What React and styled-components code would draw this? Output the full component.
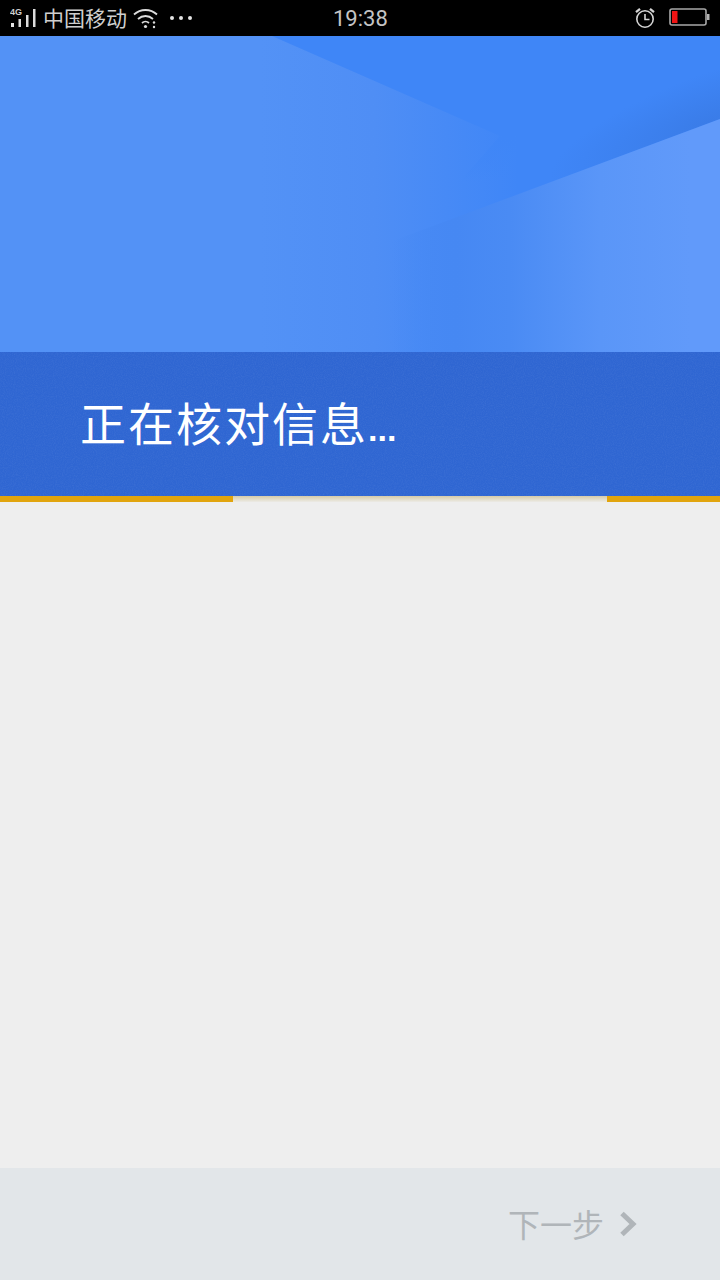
import React from 'react';
import styled, { createGlobalStyle } from 'styled-components';

const CJK = '"Noto Sans CJK SC", "Noto Sans", sans-serif';

const GlobalStyle = createGlobalStyle`
  html, body {
    margin: 0;
    padding: 0;
    background: #eeeeee;
  }
  * {
    box-sizing: border-box;
  }
`;

function SignalIcon() {
  return (
    <svg width="28" height="24" viewBox="0 0 28 24" style={{ display: 'block' }}>
      <text x="0" y="9" fontSize="9" fontWeight="700" fill="#cfcfcf" fontFamily="Liberation Sans, sans-serif">4G</text>
      <rect x="1" y="17" width="3" height="4" fill="#e4e4e4" />
      <rect x="8.5" y="13" width="2.5" height="8" fill="#dcdcdc" />
      <rect x="16" y="9" width="2.5" height="12" fill="#dcdcdc" />
      <rect x="23" y="3" width="2.5" height="18" fill="#dcdcdc" />
    </svg>
  );
}

function WifiIcon() {
  return (
    <svg width="26" height="22" viewBox="0 0 26 22" fill="none" stroke="#dcdcdc" strokeWidth="1.8" style={{ display: 'block' }}>
      <path d="M1 7.5C7.5 1.5 17.5 1.5 24 7.5" />
      <path d="M5 12C9.5 8 15.5 8 20 12" />
      <path d="M9 16C11 14.2 14 14.2 16 16" />
      <circle cx="12.5" cy="19.5" r="1.6" fill="#dcdcdc" stroke="none" />
      <circle cx="21" cy="15.5" r="1.2" fill="#dcdcdc" stroke="none" />
      <circle cx="21" cy="20" r="1.2" fill="#dcdcdc" stroke="none" />
    </svg>
  );
}

function AlarmIcon() {
  return (
    <svg width="22" height="22" viewBox="0 0 22 22" fill="none" stroke="#d4d4d4" strokeWidth="1.6" style={{ display: 'block' }}>
      <circle cx="11" cy="12" r="8.2" />
      <path d="M11 7V12.5H15.5" />
      <path d="M2 5.2L6 1.8" strokeWidth="2.2" />
      <path d="M20 5.2L16 1.8" strokeWidth="2.2" />
    </svg>
  );
}

function BatteryIcon() {
  return (
    <svg width="41" height="20" viewBox="0 0 41 20" style={{ display: 'block' }}>
      <rect x="1" y="1" width="36" height="16" rx="2" fill="none" stroke="#a8a8a8" strokeWidth="1.6" />
      <rect x="3" y="3" width="5.5" height="12" fill="#f01414" />
      <rect x="38" y="6" width="2.5" height="6" fill="#b4b4b4" />
    </svg>
  );
}

function HeroArt() {
  return (
    <svg width="720" height="316" viewBox="0 0 720 316" style={{ display: 'block' }}>
      <defs>
        <linearGradient id="baseFace" gradientUnits="userSpaceOnUse" x1="0" y1="0" x2="720" y2="0">
          <stop offset="0.36" stopColor="#5392f6" />
          <stop offset="0.52" stopColor="#4f8ef5" />
          <stop offset="0.72" stopColor="#3f86f7" />
        </linearGradient>
        <linearGradient id="topFace" gradientUnits="userSpaceOnUse" x1="0" y1="145" x2="0" y2="100">
          <stop offset="0" stopColor="#3f86f7" stopOpacity="0" />
          <stop offset="1" stopColor="#3f86f7" />
        </linearGradient>
        <linearGradient id="rightFace" gradientUnits="userSpaceOnUse" x1="390" y1="0" x2="690" y2="0">
          <stop offset="0" stopColor="#4688f3" stopOpacity="0" />
          <stop offset="0.22" stopColor="#4688f3" />
          <stop offset="0.4" stopColor="#4a8bf4" />
          <stop offset="0.7" stopColor="#5a96f8" />
          <stop offset="1" stopColor="#619afa" />
        </linearGradient>
        <radialGradient
          id="cornerShade"
          gradientUnits="userSpaceOnUse"
          cx="0"
          cy="0"
          r="1"
          gradientTransform="translate(710 86) rotate(-20.5) scale(170 48)"
        >
          <stop offset="0" stopColor="#3a7ce8" />
          <stop offset="1" stopColor="#3a7ce8" stopOpacity="0" />
        </radialGradient>
      </defs>
      <rect width="720" height="316" fill="url(#baseFace)" />
      <polygon points="272,0 720,0 720,83 415,197 500,100" fill="url(#topFace)" />
      <polygon points="500,0 720,0 720,83 500,165" fill="url(#cornerShade)" />
      <polygon points="720,83 390,206 390,316 720,316" fill="url(#rightFace)" />
    </svg>
  );
}

export default function App() {
  return (
    <>
      <GlobalStyle />
      <Page>
        <StatusBar>
          <StatusGroup>
            <SignalIcon />
            <Carrier>中国移动</Carrier>
            <WifiIcon />
            <MoreDots>
              <Dot />
              <Dot />
              <Dot />
            </MoreDots>
          </StatusGroup>
          <Clock>19:38</Clock>
          <StatusRight>
            <AlarmIcon />
            <BatteryIcon />
          </StatusRight>
        </StatusBar>
        <HeroArt />
        <Band>
          <Grain width="720" height="144">
            <filter id="grain">
              <feTurbulence type="fractalNoise" baseFrequency="0.9" numOctaves="2" seed="4" />
              <feColorMatrix values="0 0 0 0 1  0 0 0 0 1  0 0 0 0 1  0 0 0 0.5 -0.18" />
            </filter>
            <rect width="720" height="144" filter="url(#grain)" />
          </Grain>
          <Title>
            正在核对信息<Ellipsis>...</Ellipsis>
          </Title>
        </Band>
        <Progress>
          <Segment $width={233} $active />
          <Segment $width={374} />
          <Segment $width={113} $active />
        </Progress>
        <Content />
        <Footer>
          <NextButton>
            下一步
            <svg width="18" height="26" viewBox="0 0 18 26" fill="none" stroke="#b0b5b9" strokeWidth="5">
              <path d="M3 2.5L14 13L3 23.5" />
            </svg>
          </NextButton>
        </Footer>
      </Page>
    </>
  );
}

const Page = styled.div`
  width: 720px;
  height: 1280px;
  display: flex;
  flex-direction: column;
  overflow: hidden;
  background: #eeeeee;
  font-family: ${CJK};
`;

const StatusBar = styled.div`
  position: relative;
  height: 36px;
  flex: none;
  background: #000000;
  display: flex;
  align-items: center;
  justify-content: space-between;
  padding: 0 10px 0 10px;
`;

const StatusGroup = styled.div`
  display: flex;
  align-items: center;
`;

const Carrier = styled.span`
  margin-left: 5px;
  margin-right: 6px;
  margin-top: -2px;
  font-size: 21px;
  line-height: 36px;
  color: #cfcfcf;
`;

const MoreDots = styled.div`
  display: flex;
  gap: 5px;
  margin-left: 11px;
`;

const Dot = styled.i`
  width: 4px;
  height: 4px;
  border-radius: 50%;
  background: #e4e4e4;
`;

const Clock = styled.span`
  position: absolute;
  left: 333px;
  top: 4px;
  font-family: Roboto, "Liberation Sans", sans-serif;
  font-size: 22px;
  line-height: 30px;
  color: #c4c4c4;
`;

const StatusRight = styled.div`
  display: flex;
  align-items: center;
  gap: 13px;
`;

const Band = styled.div`
  position: relative;
  height: 144px;
  flex: none;
  display: flex;
  align-items: center;
  padding: 0 0 6px 80px;
  background: #2f66d2;
`;

const Grain = styled.svg`
  position: absolute;
  inset: 0;
  opacity: 0.2;
`;

const Title = styled.h1`
  position: relative;
  margin: 0;
  font-size: 46px;
  font-weight: 400;
  letter-spacing: 2px;
  color: #ffffff;
`;

const Ellipsis = styled.span`
  font-family: "Liberation Sans", sans-serif;
  font-size: 34px;
  font-weight: 700;
  letter-spacing: 0;
`;

const Progress = styled.div`
  height: 6px;
  flex: none;
  display: flex;
`;

const Segment = styled.div`
  width: ${(p) => p.$width}px;
  background: ${(p) =>
    p.$active
      ? '#e1a40d'
      : 'linear-gradient(#d6cba9, #ecebe6)'};
`;

const Content = styled.main`
  flex: 1;
  background: #eeeeee;
`;

const Footer = styled.footer`
  height: 112px;
  flex: none;
  display: flex;
  align-items: center;
  justify-content: flex-end;
  padding: 0 83px 3px 0;
  background: #e2e6e9;
`;

const NextButton = styled.div`
  display: flex;
  align-items: center;
  gap: 15px;
  font-size: 32px;
  color: #b0b5b9;

  svg {
    margin-top: 3px;
  }
`;
